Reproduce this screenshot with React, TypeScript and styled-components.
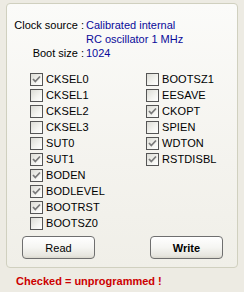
import React, { FC } from "react";
import styled, { createGlobalStyle } from "styled-components";

const GlobalStyle = createGlobalStyle`
  html, body {
    margin: 0;
    padding: 0;
    background: #EDEBE3;
  }
  body {
    font-family: "Liberation Sans", Arial, sans-serif;
    font-size: 11px;
    color: #000;
  }
`;

const Page = styled.div`
  width: 244px;
  height: 292px;
  padding: 3px 0 0 6px;
  box-sizing: border-box;
`;

const GroupBox = styled.div`
  width: 232px;
  height: 265px;
  box-sizing: border-box;
  border: 1px solid #D0D0BF;
  border-radius: 4px;
  background: linear-gradient(to bottom, #FBFBF9 0%, #F4F3EE 60%, #F0EFE8 100%);
  padding-top: 14px;
  display: flex;
  flex-direction: column;
`;

const InfoGrid = styled.div`
  display: grid;
  grid-template-columns: 77px auto;
  column-gap: 2px;
  line-height: 14px;
`;

const InfoLabel = styled.div`
  text-align: right;
  white-space: nowrap;
`;

const InfoValue = styled.div`
  color: #0A0A9A;
  white-space: nowrap;
`;

const FuseGrid = styled.div`
  display: grid;
  grid-template-columns: 116px 100px;
  margin: 11px 0 0 23px;
`;

const Column = styled.div`
  display: flex;
  flex-direction: column;
`;

const Row = styled.div`
  height: 16px;
  display: flex;
  align-items: center;
  gap: 3px;
  white-space: nowrap;
`;

const Box = styled.span`
  width: 13px;
  height: 13px;
  box-sizing: border-box;
  border: 1px solid #555;
  background: linear-gradient(135deg, #DCDCD6 0%, #F4F4F0 60%, #FFFFFF 100%);
  display: flex;
  align-items: center;
  justify-content: center;
  flex: none;
`;

const Label = styled.span`
  letter-spacing: 0.1px;
`;

const Buttons = styled.div`
  display: flex;
  margin: 5px 0 0 15px;
  gap: 55px;
`;

const Button = styled.button<{ $bold?: boolean }>`
  width: 73px;
  height: 23px;
  box-sizing: border-box;
  border: 1px solid #6F6F6F;
  border-radius: 4px;
  background: linear-gradient(to bottom, #FFFFFF 0%, #F5F5F2 50%, #E6E5DE 90%, #D8D6CC 100%);
  font-family: "Liberation Sans", Arial, sans-serif;
  font-size: 11px;
  font-weight: ${(p) => (p.$bold ? 700 : 400)};
  color: #000;
  padding: 0;
`;

const Warning = styled.div`
  color: #CC0000;
  font-weight: 700;
  margin: 6px 0 0 10px;
  line-height: 14px;
`;

const Check: FC<{ checked?: boolean; label: string }> = ({ checked, label }) => (
  <Row>
    <Box>
      {checked && (
        <svg width="9" height="9" viewBox="0 0 9 9">
          <path d="M1 4 L3.3 6.5 L8 1.5" fill="none" stroke="#7A7A7A" strokeWidth="1.8" />
        </svg>
      )}
    </Box>
    <Label>{label}</Label>
  </Row>
);

const left: [string, boolean][] = [
  ["CKSEL0", true],
  ["CKSEL1", false],
  ["CKSEL2", false],
  ["CKSEL3", false],
  ["SUT0", false],
  ["SUT1", true],
  ["BODEN", true],
  ["BODLEVEL", true],
  ["BOOTRST", true],
  ["BOOTSZ0", false],
];

const right: [string, boolean][] = [
  ["BOOTSZ1", false],
  ["EESAVE", false],
  ["CKOPT", true],
  ["SPIEN", false],
  ["WDTON", true],
  ["RSTDISBL", true],
];

export default function App() {
  return (
    <Page>
      <GlobalStyle />
      <GroupBox>
        <InfoGrid>
          <InfoLabel>Clock source :</InfoLabel>
          <InfoValue>
            Calibrated internal
            <br />
            RC oscillator 1 MHz
          </InfoValue>
          <InfoLabel>Boot size :</InfoLabel>
          <InfoValue>1024</InfoValue>
        </InfoGrid>
        <FuseGrid>
          <Column>
            {left.map(([l, c]) => (
              <Check key={l} label={l} checked={c} />
            ))}
          </Column>
          <Column>
            {right.map(([l, c]) => (
              <Check key={l} label={l} checked={c} />
            ))}
          </Column>
        </FuseGrid>
        <Buttons>
          <Button>Read</Button>
          <Button $bold>Write</Button>
        </Buttons>
      </GroupBox>
      <Warning>Checked = unprogrammed !</Warning>
    </Page>
  );
}
